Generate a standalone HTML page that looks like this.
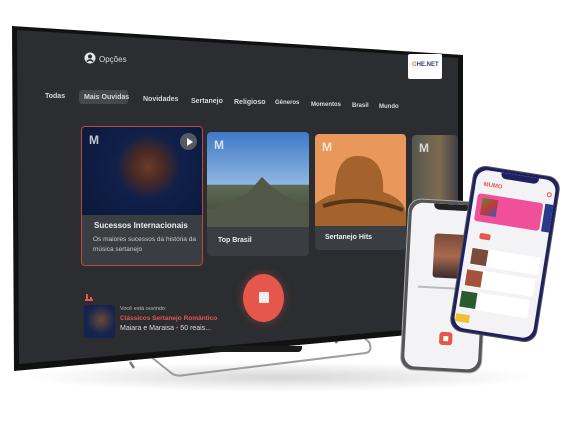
<!DOCTYPE html>
<html><head><meta charset="utf-8"><style>
*{margin:0;padding:0;box-sizing:border-box}
body{width:568px;height:433px;background:#fff;position:relative;overflow:hidden;font-family:"Liberation Sans",sans-serif}
.a{position:absolute}
.tv{position:absolute;left:0;top:0;width:568px;height:433px}
.t{position:absolute;color:#d8d9db;font-size:7px;font-weight:bold;white-space:nowrap}
.card{position:absolute;border-radius:4px;overflow:hidden;background:#3a3d42}
.M{position:absolute;left:7px;top:6px;color:rgba(255,255,255,.75);font-weight:bold;font-size:12px}
.phone{position:absolute;border-radius:13px;background:#222;padding:3px}
.scr{width:100%;height:100%;border-radius:11px;background:#f3f3f5;position:relative;overflow:hidden}
</style></head><body>
<div class="a" style="left:20px;top:362px;width:520px;height:30px;border-radius:50%;background:radial-gradient(ellipse,rgba(0,0,0,.16),rgba(0,0,0,0) 70%)"></div>
<svg class="a" style="left:0;top:0" width="568" height="433">
<path d="M150 356 L170 372 Q175 377 185 375 L366 353 Q373 351 369 342 L360 334" fill="none" stroke="#9a9ca0" stroke-width="2"/>
<path d="M130 362 L134 368" stroke="#777" stroke-width="2.5"/>
<path d="M333 337 L337 343" stroke="#777" stroke-width="2.5"/>
</svg>
<div class="tv" style="clip-path:polygon(12px 26px,463px 55px,463px 330px,14px 371px);background:#111"></div>
<div class="tv" style="clip-path:polygon(17px 30px,458px 58px,458px 325px,19px 364px);background:#2b2d30"></div>
<div class="a" style="left:210px;top:346px;width:92px;height:6px;background:#1a1a1a;border-radius:0 0 4px 4px"></div>
<svg class="a" style="left:84px;top:52px" width="12" height="12" viewBox="0 0 12 12"><circle cx="6" cy="6" r="5.5" fill="#e6e6e6"/><circle cx="6" cy="4.5" r="2" fill="#2b2d30"/><path d="M2.8 9.5Q6 6.5 9.2 9.5" stroke="#2b2d30" stroke-width="1.6" fill="none"/></svg>
<div class="t" style="left:99px;top:55px;font-size:8px;font-weight:normal;color:#ddd">Opções</div>
<div class="a" style="left:408px;top:54px;width:34px;height:25px;background:#fff;border-radius:2px;font-size:6px;font-weight:bold;color:#2a3f8a;padding:8px 0 0 4px"><span style="color:#f07a1a">O</span>HE.NET</div>
<div class="t" style="left:45px;top:93px">Todas</div>
<div class="a" style="left:79px;top:90px;width:49px;height:14px;background:#44474c;border-radius:3px"></div>
<div class="t" style="left:84px;top:94px">Mais Ouvidas</div>
<div class="t" style="left:143px;top:96px">Novidades</div>
<div class="t" style="left:191px;top:98px">Sertanejo</div>
<div class="t" style="left:234px;top:99px">Religioso</div>
<div class="t" style="left:275px;top:100px;font-size:6px">Gêneros</div>
<div class="t" style="left:311px;top:102px;font-size:6px">Momentos</div>
<div class="t" style="left:352px;top:103px;font-size:6px">Brasil</div>
<div class="t" style="left:379px;top:104px;font-size:6px">Mundo</div>
<div class="card" style="left:81px;top:126px;width:122px;height:140px;border:1px solid #c0493c">
 <div class="a" style="left:0;top:0;width:120px;height:88px;background:radial-gradient(circle at 55% 45%,#6a3b2a 0,#4b2a24 18%,#10204a 40%,#0b1838 100%)"></div>
 <div class="M">M</div>
 <div class="a" style="left:98px;top:6px;width:17px;height:17px;border-radius:50%;background:#555a60"></div>
 <div class="a" style="left:105px;top:11px;border-left:6px solid #fff;border-top:4px solid transparent;border-bottom:4px solid transparent"></div>
 <div class="t" style="left:12px;top:94px;font-size:8px;color:#eee">Sucessos Internacionais</div>
 <div class="t" style="left:11px;top:108px;font-size:6.5px;font-weight:normal;color:#ccc;line-height:10px">Os maiores sucessos da história da<br>música sertanejo</div>
</div>
<div class="card" style="left:207px;top:132px;width:102px;height:124px">
 <div class="a" style="left:0;top:0;width:102px;height:95px;background:linear-gradient(#3f78c8,#8fb6e0 55%,#5d6a55 56%,#4a5540 80%,#4c6a90 88%,#2d4870)"></div>
 <svg class="a" style="left:0;top:40px" width="102" height="55"><path d="M0 40 L20 30 L40 22 L55 5 L65 15 L80 25 L102 35 L102 55 L0 55Z" fill="#515848"/></svg>
 <div class="M">M</div>
 <div class="t" style="left:11px;top:105px;color:#eee">Top Brasil</div>
</div>
<div class="card" style="left:315px;top:134px;width:91px;height:116px">
 <div class="a" style="left:0;top:0;width:91px;height:92px;background:#e8985a"></div>
 <svg class="a" style="left:0;top:10px" width="91" height="82"><path d="M20 50 Q20 10 45 12 Q70 14 68 48 Q90 55 91 70 L91 82 L0 82 L0 60 Q10 52 20 50Z" fill="#a4622d"/><path d="M8 62 Q45 50 88 66" stroke="#5a3518" stroke-width="4" fill="none"/></svg>
 <div class="M">M</div>
 <div class="t" style="left:10px;top:100px;color:#eee">Sertanejo Hits</div>
</div>
<div class="card" style="left:412px;top:135px;width:46px;height:80px;background:linear-gradient(90deg,#56574f,#7d6b50 60%,#3c3e44)"><div class="M">M</div></div>
<div class="a" style="left:85px;top:293px;width:8px;height:8px;border-bottom:2px solid #e5574a"></div>
<div class="a" style="left:86px;top:294px;width:2px;height:7px;background:#e5574a"></div>
<div class="a" style="left:90px;top:297px;width:2px;height:4px;background:#e5574a"></div>
<div class="a" style="left:84px;top:305px;width:31px;height:33px;border-radius:3px;background:radial-gradient(circle at 55% 45%,#6a4a36,#12244f 60%)"></div>
<div class="t" style="left:120px;top:306px;font-size:5.5px;font-weight:normal;color:#bbb">Você está ouvindo:</div>
<div class="t" style="left:120px;top:315px;font-size:6.5px;color:#e5574a">Clássicos Sertanejo Romântico</div>
<div class="t" style="left:120px;top:325px;font-size:7px;font-weight:normal;color:#ddd">Maiara e Maraisa - 50 reais...</div>
<div class="a" style="left:243px;top:274px;width:41px;height:48px;border-radius:50%;background:#e5574a;box-shadow:0 0 10px rgba(229,87,74,.4)"></div>
<div class="a" style="left:259px;top:292px;width:10px;height:11px;background:#eee;border-radius:1px"></div>
<!-- back phone -->
<div class="phone" style="left:404px;top:200px;width:82px;height:172px;transform:rotate(3deg);background:#555;border:1px solid #aaa">
 <div class="scr">
  <div class="a" style="left:22px;top:0;width:36px;height:6px;background:#222;border-radius:0 0 5px 5px"></div>
  <div class="a" style="left:24px;top:30px;width:45px;height:44px;border-radius:3px;background:linear-gradient(#7a4a3a,#a86a50 50%,#3a2a2a)"></div>
  <div class="a" style="left:10px;top:83px;width:60px;height:2px;background:#bbb"></div>
  <div class="a" style="left:34px;top:128px;width:13px;height:13px;border-radius:3px;background:#e5574a"></div>
  <div class="a" style="left:38px;top:132px;width:5px;height:5px;background:#fff"></div>
 </div>
</div>
<!-- front phone -->
<div class="phone" style="left:461px;top:170px;width:88px;height:168px;transform:rotate(9deg);background:#1e2060;border:1px solid #555">
 <div class="scr">
  <div class="a" style="left:24px;top:0;width:38px;height:6px;background:#1e2060;border-radius:0 0 5px 5px"></div>
  <div class="a" style="left:8px;top:12px;color:#e5574a;font-size:6px;font-weight:bold">MUMO</div>
  <div class="a" style="left:72px;top:12px;width:5px;height:5px;border-radius:50%;border:1px solid #e5574a"></div>
  <div class="a" style="left:4px;top:24px;width:66px;height:28px;border-radius:3px;background:#f0509a"></div>
  <div class="a" style="left:9px;top:28px;width:16px;height:17px;background:linear-gradient(135deg,#5a8a30,#c03a3a,#3a5ac0)"></div>
  <div class="a" style="left:72px;top:24px;width:10px;height:28px;background:#2a3a8a"></div>
  <div class="a" style="left:12px;top:63px;width:11px;height:6px;border-radius:2px;background:#e5574a"></div>
  <div class="a" style="left:6px;top:78px;width:70px;height:18px;background:#fff;border-radius:2px"></div>
  <div class="a" style="left:7px;top:79px;width:16px;height:16px;background:#7a4a3a"></div>
  <div class="a" style="left:4px;top:100px;width:70px;height:18px;background:#fff;border-radius:2px"></div>
  <div class="a" style="left:5px;top:101px;width:16px;height:16px;background:#a4523a"></div>
  <div class="a" style="left:2px;top:122px;width:70px;height:18px;background:#fff;border-radius:2px"></div>
  <div class="a" style="left:3px;top:123px;width:16px;height:16px;background:#2a5a30"></div>
  <div class="a" style="left:1px;top:146px;width:14px;height:8px;background:#f0c030"></div>
 </div>
</div>
</body></html>
